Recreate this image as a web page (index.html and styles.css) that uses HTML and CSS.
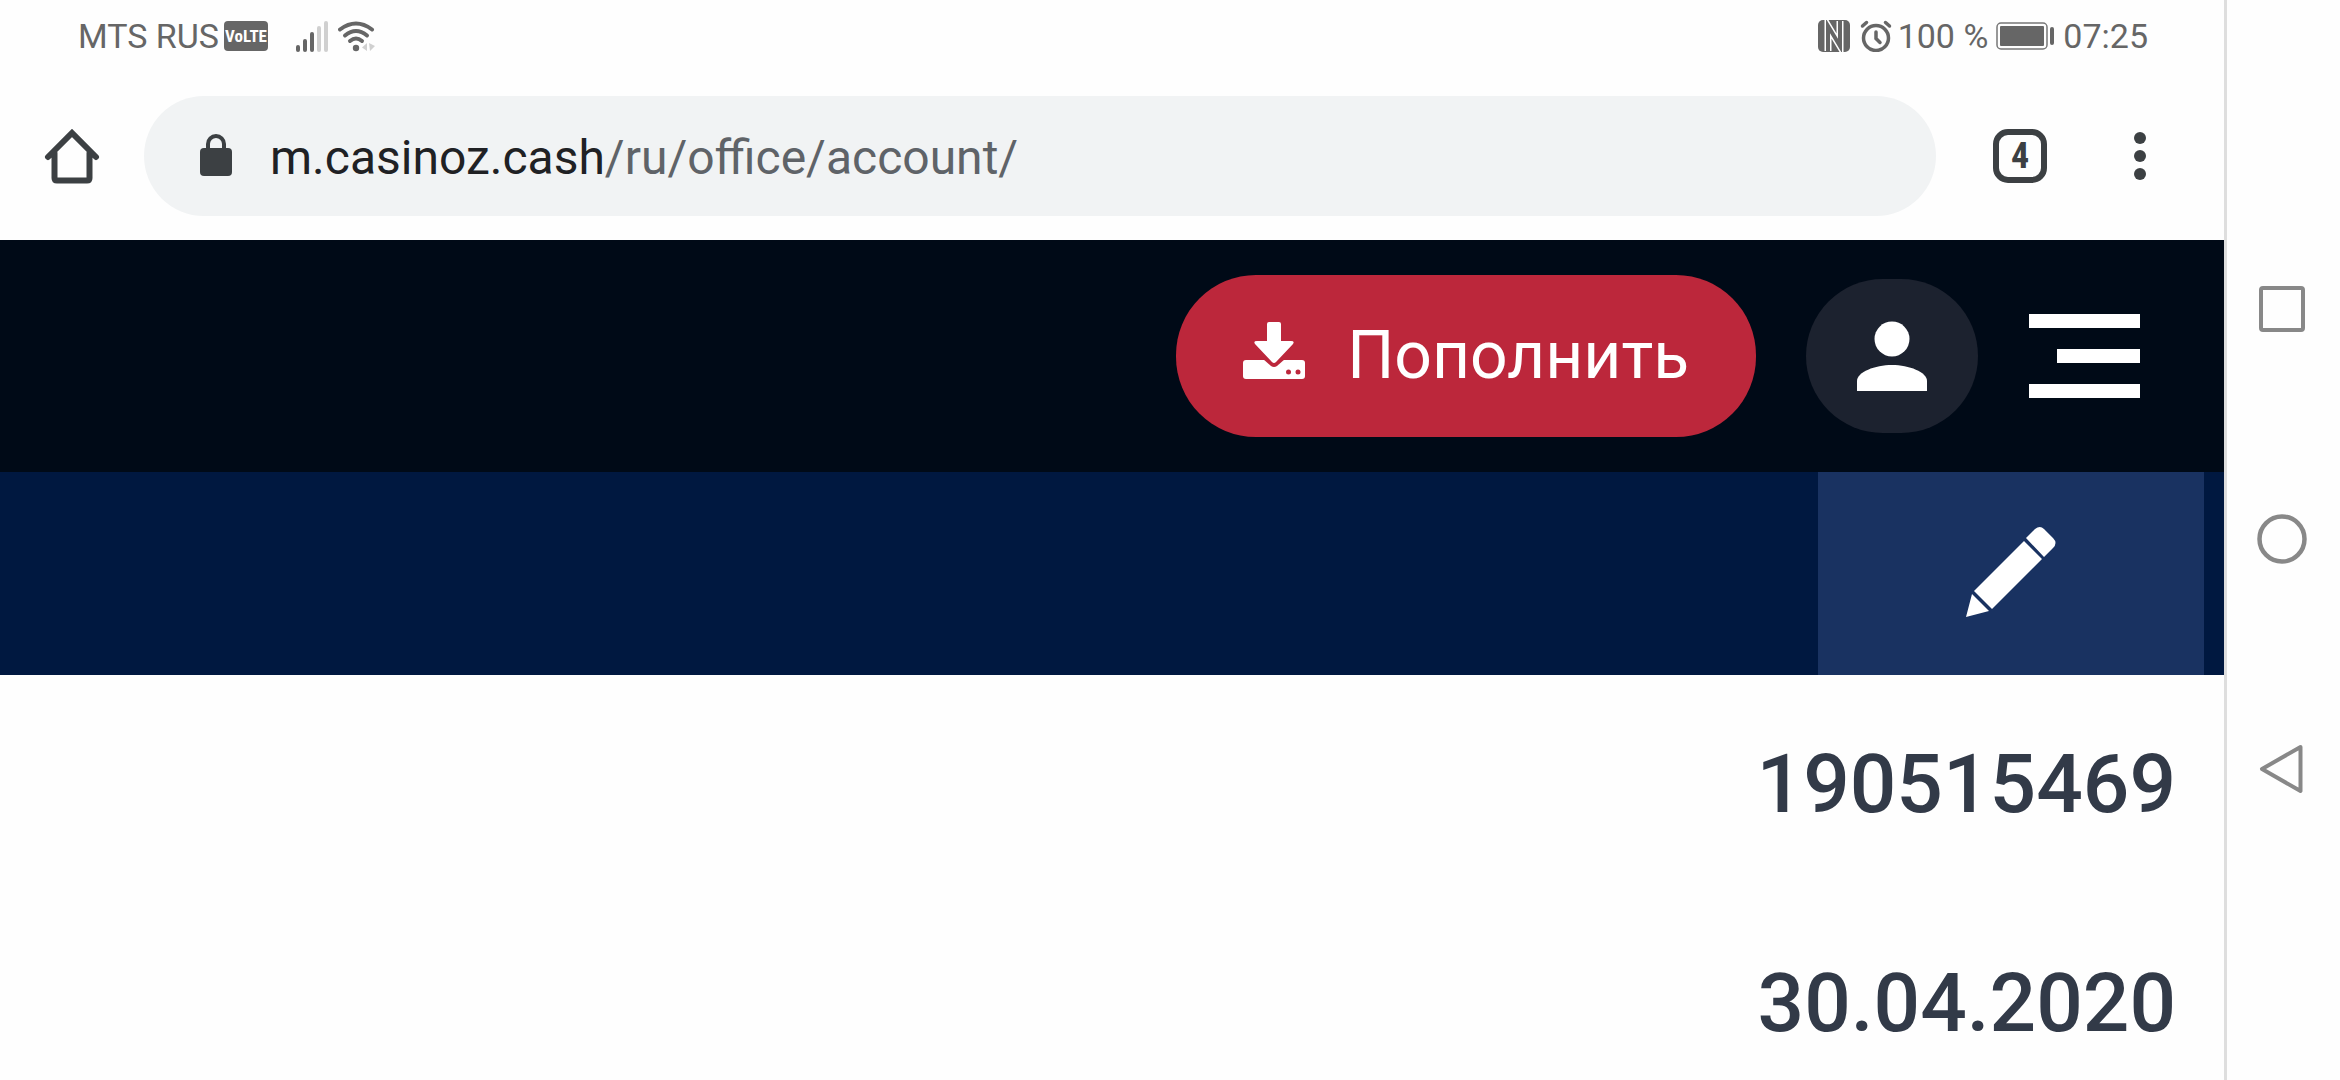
FILE: index.html
```html
<!DOCTYPE html>
<html lang="ru">
<head>
  <meta charset="UTF-8">
  <meta name="viewport" content="width=device-width, initial-scale=1.0">
  <title>Личный кабинет</title>
  <link rel="stylesheet" href="styles.css">
</head>
<body>

<div class="screen">

  <div class="statusbar">
    <div class="status-left">
      <span>MTS RUS</span>
      <span class="volte">VoLTE</span>
      <svg class="signal" width="34" height="32" viewBox="0 0 34 32">
        <g fill="#666">
          <rect x="0" y="25" width="4" height="7" rx="2"/>
          <rect x="7" y="19" width="4" height="13" rx="2"/>
          <rect x="14" y="12" width="4" height="20" rx="2"/>
        </g>
        <g fill="#d0d0d0">
          <rect x="21" y="6" width="4" height="26" rx="2"/>
          <rect x="28" y="1" width="4" height="31" rx="2"/>
        </g>
      </svg>
      <svg width="38" height="32" viewBox="0 0 38 32">
        <g fill="none" stroke="#666" stroke-width="4" stroke-linecap="round">
          <path d="M2 9.500Q18 -2.500 34 9.500"/>
          <path d="M7 15.500Q18 6.500 29 15.500"/>
          <path d="M12 21Q18 16 24 21"/>
        </g>
        <circle cx="18" cy="28" r="3.200" fill="#666"/>
        <path d="M24 27.500l5-4.500v8zM31 23l6 3-5 5z" fill="#d0d0d0"/>
      </svg>
    </div>
    <div class="status-right">
      <svg width="32" height="32" viewBox="0 0 32 32">
        <rect width="32" height="32" rx="5" fill="#666"/>
        <path d="M10 31V6L22 26V1" fill="none" stroke="#fff" stroke-width="7"/>
        <path d="M10 32V6L22 26V0" fill="none" stroke="#666" stroke-width="4"/>
      </svg>
      <svg class="alarm" width="32" height="32" viewBox="0 0 32 32">
        <g fill="none" stroke="#666" stroke-width="3.500" stroke-linecap="round">
          <circle cx="16" cy="18" r="12.500"/>
          <path d="M2.500 6l4-3.500M29.500 6l-4-3.500M16 12v6.500l4 4"/>
        </g>
      </svg>
      <span>100 %</span>
      <svg class="battery" width="60" height="28" viewBox="0 0 60 28">
        <rect x="1" y="1" width="50" height="26" rx="4" fill="none" stroke="#777" stroke-width="1.500"/>
        <rect x="4" y="4" width="44" height="20" rx="1" fill="#666"/>
        <rect x="54" y="5" width="4" height="18" rx="2" fill="#666"/>
      </svg>
      <span>07:25</span>
    </div>
  </div>

  <div class="toolbar">
    <button class="icon-btn" aria-label="Домой">
      <svg width="56" height="56" viewBox="0 0 56 56">
        <path d="M4 29L28 5l24 24M10.500 25v25q0 2.500 2.500 2.500h30q2.500 0 2.500-2.500V25" fill="none" stroke="#3c4043" stroke-width="6" stroke-linecap="round"/>
      </svg>
    </button>
    <div class="address">
      <svg width="32" height="44" viewBox="0 0 32 44">
        <rect y="14" width="32" height="28" rx="4" fill="#3c4043"/>
        <path d="M8 16v-6a8 8 0 0 1 16 0v6" fill="none" stroke="#3c4043" stroke-width="4"/>
      </svg>
      <a class="url" href="#">m.casinoz.cash<span>/ru/office/account/</span></a>
    </div>
    <button class="tabs" aria-label="Вкладки">4</button>
    <button class="icon-btn dots" aria-label="Меню браузера">
      <svg width="12" height="48" viewBox="0 0 12 48" fill="#3c4043">
        <circle cx="6" cy="6" r="6"/>
        <circle cx="6" cy="24" r="6"/>
        <circle cx="6" cy="42" r="6"/>
      </svg>
    </button>
  </div>

  <header class="site-header">
    <button class="deposit">
      <svg width="62" height="66" viewBox="0 0 62 66">
        <path d="M3 38h56q3 0 3 3v13q0 3-3 3H3q-3 0-3-3V41q0-3 3-3z" fill="#fff"/>
        <path d="M20 37l8 7q3 2 6 0l8-7z" fill="#bc273b"/>
        <path d="M26 0h10q2 0 2 2v17h10q4 0 2 3L33 40q-2 2-4 0L12 22q-2-3 2-3h10V2q0-2 2-2z" fill="#fff"/>
        <circle cx="45.500" cy="50" r="2.500" fill="#bc273b"/>
        <circle cx="55" cy="50" r="2.500" fill="#bc273b"/>
      </svg>
      <span>Пополнить</span>
    </button>
    <button class="profile" aria-label="Профиль">
      <svg width="70" height="70" viewBox="0 0 70 70" fill="#fff">
        <circle cx="35" cy="18" r="17.500"/>
        <path d="M0 70V60C0 51 18 44 35 44s35 7 35 16v10z"/>
      </svg>
    </button>
    <button class="icon-btn" aria-label="Меню">
      <svg width="112" height="86" viewBox="0 0 112 86" fill="#fff">
        <rect x="1" y="1" width="111" height="14"/>
        <rect x="29" y="36" width="83" height="14"/>
        <rect x="1" y="71" width="111" height="14"/>
      </svg>
    </button>
  </header>

  <div class="subheader">
    <button class="edit" aria-label="Редактировать">
      <svg width="92" height="96" viewBox="0 0 92 96" fill="#fff">
        <path d="M1 91L7 68l17 17zM9 65L59 15l18 18-50 50zM61 12l9-9q5-4 9 0l9 9q5 5 0 10l-9 9z"/>
      </svg>
    </button>
  </div>

  <main class="account">
    <p>190515469</p>
    <p>30.04.2020</p>
  </main>
</div>

<nav class="navbar">
  <button class="icon-btn" aria-label="Недавние">
    <svg width="50" height="50" viewBox="0 0 50 50">
      <rect x="4" y="4" width="42" height="42" rx="2" fill="none" stroke="#888" stroke-width="4"/>
    </svg>
  </button>
  <button class="icon-btn" aria-label="Главный экран">
    <svg width="50" height="50" viewBox="0 0 50 50">
      <circle cx="25" cy="25" r="22.500" fill="none" stroke="#888" stroke-width="4.500"/>
    </svg>
  </button>
  <button class="icon-btn" aria-label="Назад">
    <svg width="50" height="50" viewBox="0 0 50 50">
      <path d="M43.500 3L5 25l38.500 22z" fill="none" stroke="#888" stroke-width="4" stroke-linejoin="round"/>
    </svg>
  </button>
</nav>

</body>
</html>
```
FILE: styles.css
```css
* {
  box-sizing: border-box;
}
body {
  margin: 0;
  min-height: 100vh;
  display: flex;
  background-color: #fefefe;
  font-family: Roboto, sans-serif;
}
svg {
  display: block;
  flex: none;
}
button {
  border: 0;
  padding: 0;
  background: none;
  font-family: inherit;
  cursor: pointer;
}
.screen {
  flex: 1;
  min-width: 0;
}

/* status bar */
.statusbar {
  display: flex;
  justify-content: space-between;
  align-items: center;
  height: 72px;
  padding: 0 76px 0 78px;
  color: #666;
  font-size: 34px;
  line-height: 40px;
}
.status-left,
.status-right {
  display: flex;
  align-items: center;
}
.volte {
  width: 44px;
  height: 30px;
  margin-left: 5px;
  border-radius: 4px;
  background-color: #666;
  color: #fff;
  font-family: "Roboto Condensed", Roboto, sans-serif;
  font-size: 17px;
  font-weight: 700;
  line-height: 30px;
  text-align: center;
}
.signal {
  margin: 0 8px 0 28px;
}
.alarm {
  margin: 0 6px 0 10px;
}
.battery {
  margin: 0 7px 0 8px;
}

/* browser toolbar */
.toolbar {
  display: flex;
  align-items: center;
  height: 168px;
  padding: 0 78px 0 44px;
}
.address {
  flex: 1;
  display: flex;
  align-items: center;
  gap: 38px;
  height: 120px;
  margin: 0 57px 0 44px;
  padding: 0 56px;
  border-radius: 60px;
  background-color: #f1f3f4;
}
.url {
  padding-top: 4px;
  color: #202124;
  font-size: 48px;
  line-height: 56px;
  text-decoration: none;
}
.url span {
  color: #5f6368;
}
.tabs {
  width: 54px;
  height: 54px;
  border: 6px solid #3c4043;
  border-radius: 15px;
  color: #3c4043;
  font-family: "Roboto Condensed", Roboto, sans-serif;
  font-size: 36px;
  font-weight: 700;
  line-height: 42px;
}
.dots {
  margin-left: 87px;
}

/* site */
.site-header {
  display: flex;
  justify-content: flex-end;
  align-items: center;
  height: 232px;
  padding-right: 84px;
  background-color: #000a17;
}
.deposit {
  display: flex;
  align-items: center;
  gap: 42px;
  height: 162px;
  padding: 0 67px 2px;
  border-radius: 80px;
  background-color: #bc273b;
  color: #fff;
  font-size: 66px;
}
.profile {
  display: flex;
  justify-content: center;
  align-items: center;
  width: 172px;
  height: 154px;
  margin: 0 50px;
  border-radius: 77px;
  background-color: #1c222f;
}
.subheader {
  display: flex;
  justify-content: flex-end;
  height: 203px;
  padding-right: 20px;
  background-color: #001840;
}
.edit {
  display: flex;
  justify-content: center;
  align-items: center;
  width: 386px;
  background-color: #193261;
}
.account {
  padding: 0 48px;
  color: #323a48;
  font-size: 82px;
  font-weight: 500;
  line-height: 219px;
  text-align: right;
}
.account p {
  margin: 0;
}

/* system navigation */
.navbar {
  display: flex;
  flex-direction: column;
  align-items: center;
  gap: 180px;
  width: 116px;
  padding: 284px 4px 0 0;
  border-left: 3px solid #dedede;
}
```
